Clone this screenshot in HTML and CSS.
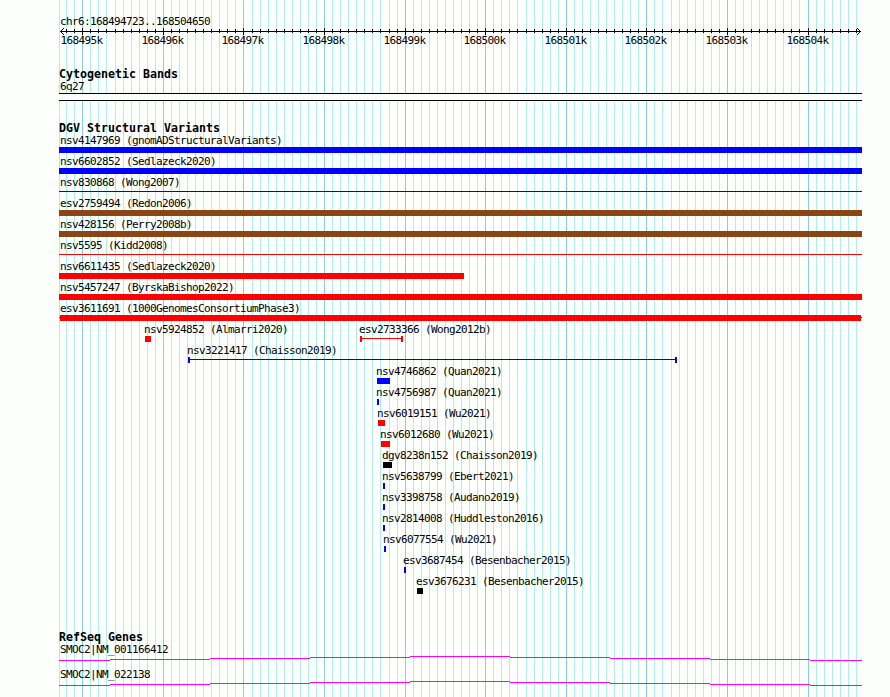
FILE: index.html
```html
<!DOCTYPE html>
<html lang="en">
<head>
    <meta charset="UTF-8">
    <title>chr6:168494723..168504650</title>
    <link rel="stylesheet" href="styles.css">
</head>
<body>

<div class="browser">
    <svg class="grid" id="grid" width="890" height="697" shape-rendering="crispEdges"></svg>

    <div class="ruler">
        <div class="label">chr6:168494723..168504650</div>
        <svg class="axis" id="axis" width="803" height="7" viewBox="59 28 803 7" shape-rendering="crispEdges"></svg>
        <div class="ruler-labels" id="rulerLabels"></div>
    </div>

    <div class="track cyto">
        <h2>Cytogenetic Bands</h2>
        <div class="label">6q27</div>
        <div class="band"></div>
    </div>

    <div class="track variants">
        <h2>DGV Structural Variants</h2>
        <div id="variants"></div>
    </div>

    <div class="track genes">
        <h2>RefSeq Genes</h2>
        <div class="gene">
            <div class="label">SMOC2|NM_001166412</div>
            <svg class="intron" width="803" height="5" shape-rendering="crispEdges"></svg>
        </div>
        <div class="gene">
            <div class="label">SMOC2|NM_022138</div>
            <svg class="intron" width="803" height="5" shape-rendering="crispEdges"></svg>
        </div>
    </div>
</div>

<script>
const LEFT = 59, RIGHT = 862;

function rect(x, y, w, h, color) {
    return `<rect x="${x}" y="${y}" width="${w}" height="${h}" fill="${color}"/>`;
}

// one tick every 100 bp, a major one every 1000 bp
const ticks = [];
for (let k = -2; k <= 96; k++) {
    ticks.push({ k: k, x: Math.floor(82.803 + 8.0582 * k), major: k >= 0 && k % 10 === 0 });
}

let grid = rect(LEFT, 0, 1, 697, "#afeeee");
let axis = rect(60, 31, 801, 1, "#000");
let labels = "";
ticks.forEach(t => {
    grid += rect(t.x, 0, 1, 697, t.major ? "#87ceeb" : "#afeeee");
    axis += t.major ? rect(t.x, 28, 1, 7, "#000") : rect(t.x, 29, 1, 4, "#000");
    if (t.major) {
        const left = Math.max(t.x - 21, 60) - LEFT;
        labels += `<span class="label" style="margin-left:${left}px">${168495 + t.k / 10}k</span>`;
    }
});
// arrow heads
for (let i = 1; i <= 3; i++) {
    axis += rect(60 + i, 31 - i, 1, 1, "#000") + rect(60 + i, 31 + i, 1, 1, "#000");
    axis += rect(860 - i, 31 - i, 1, 1, "#000") + rect(860 - i, 31 + i, 1, 1, "#000");
}
document.getElementById("grid").innerHTML = grid;
document.getElementById("axis").innerHTML = axis;
document.getElementById("rulerLabels").innerHTML = labels;

// name, start, end, color, shape
const rows = [
    [["nsv4147969 (gnomADStructuralVariants)", 59, 862, "blue", "box"]],
    [["nsv6602852 (Sedlazeck2020)", 59, 862, "blue", "box"]],
    [["nsv830868 (Wong2007)", 59, 862, "blue", "line"]],
    [["esv2759494 (Redon2006)", 59, 862, "brown", "box"]],
    [["nsv428156 (Perry2008b)", 59, 862, "brown", "box"]],
    [["nsv5595 (Kidd2008)", 59, 862, "red", "line"]],
    [["nsv6611435 (Sedlazeck2020)", 59, 464, "red", "box"]],
    [["nsv5457247 (ByrskaBishop2022)", 59, 862, "red", "box"]],
    [["esv3611691 (1000GenomesConsortiumPhase3)", 59, 862, "red", "inset"]],
    [["nsv5924852 (Almarri2020)", 145, 151, "red", "box"],
     ["esv2733366 (Wong2012b)", 360, 403, "red", "span"]],
    [["nsv3221417 (Chaisson2019)", 188, 677, "blue", "span"]],
    [["nsv4746862 (Quan2021)", 377, 390, "blue", "box"]],
    [["nsv4756987 (Quan2021)", 377, 379, "blue", "box"]],
    [["nsv6019151 (Wu2021)", 378, 385, "red", "box"]],
    [["nsv6012680 (Wu2021)", 381, 390, "red", "box"]],
    [["dgv8238n152 (Chaisson2019)", 383, 392, "black", "box"]],
    [["nsv5638799 (Ebert2021)", 383, 385, "blue", "box"]],
    [["nsv3398758 (Audano2019)", 383, 385, "blue", "box"]],
    [["nsv2814008 (Huddleston2016)", 383, 385, "blue", "box"]],
    [["nsv6077554 (Wu2021)", 384, 386, "blue", "box"]],
    [["esv3687454 (Besenbacher2015)", 404, 406, "blue", "box"]],
    [["esv3676231 (Besenbacher2015)", 417, 423, "black", "box"]]
];

document.getElementById("variants").innerHTML = rows.map(row =>
    `<div class="row">` + row.map(([name, start, end, color, shape]) =>
        `<div class="feature ${color}" style="margin-left:${start - LEFT}px">
            <div class="label${start > LEFT ? " inner" : ""}">${name}</div>
            <div class="glyph ${shape}" style="width:${end - start}px"></div>
        </div>`
    ).join("") + `</div>`
).join("");

// intron arc, drawn in 1px steps
const stops = [59, 110, 210, 310, 410, 510, 610, 710, 810, RIGHT];
const arc = stops.slice(0, -1).map((x, i) =>
    rect(x - LEFT, Math.abs(4 - i), stops[i + 1] - x, 1, "#ff00ff")
).join("");
document.querySelectorAll(".intron").forEach(svg => svg.innerHTML = arc);
</script>

</body>
</html>
```
FILE: styles.css
```css
body { margin: 0; background: #fdfffc; color: #000; font-family: "DejaVu Sans Mono", monospace; }
svg { display: block; }

.browser { position: relative; width: 803px; height: 683px; padding: 14px 28px 0 59px; overflow: hidden; }
.grid { position: absolute; top: 0; left: 0; z-index: -1; }

h2 { margin: 0; font-size: 11.63px; line-height: 14px; height: 12px; font-weight: bold; white-space: nowrap; }
.label { box-sizing: border-box; height: 14px; padding: 1px 0 0 1px; font-size: 11px; line-height: 14px; letter-spacing: -0.622px; white-space: nowrap; }

.ruler { height: 53px; }
.ruler-labels { display: grid; margin-top: -2px; }
.ruler-labels .label { grid-area: 1 / 1; padding-left: 0; text-indent: -0.6px; }

.cyto { height: 54px; }
.band { height: 6px; border-top: 1px solid #000; border-bottom: 1px solid #000; background: #fdfffc; }

.variants { height: 509px; }
.row { display: grid; height: 21px; }
.feature { grid-area: 1 / 1; width: 0; }
.label.inner { padding-left: 0; margin-left: -1px; }
.glyph { height: 6px; background: currentColor; }
.glyph.line { height: 1px; margin-top: 2px; }
.glyph.inset { background: linear-gradient(currentColor, currentColor) 1px 0 / 801px 6px no-repeat, linear-gradient(currentColor, currentColor) 0 2px / 803px 1px no-repeat; }
.glyph.span { box-sizing: border-box; border: solid currentColor; border-width: 0 2px; background: linear-gradient(currentColor, currentColor) 0 2px / 100% 1px no-repeat; }

.blue { color: #0000ff; }
.red { color: #ff0000; }
.brown { color: #8b4513; }
.black { color: #000; }
.feature .label { color: #000; }

.gene { height: 25px; }
```
